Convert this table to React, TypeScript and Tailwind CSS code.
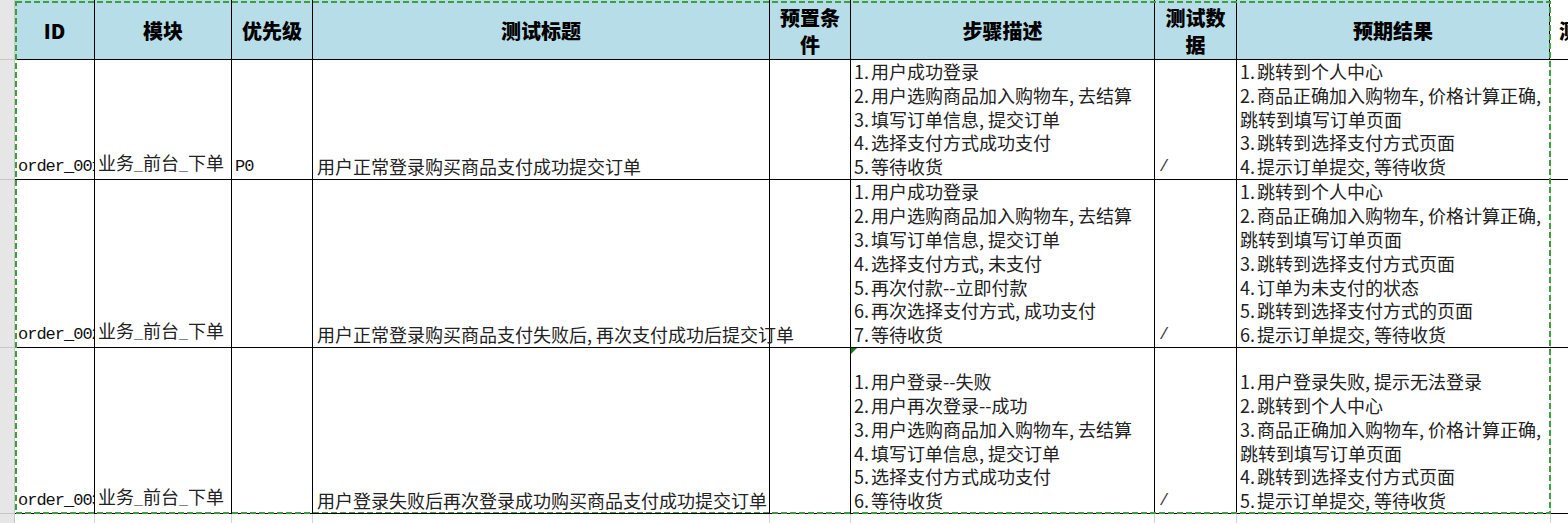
import React from "react";

const bodyFont = {
  fontFamily: '"Noto Sans CJK SC", "Noto Sans", sans-serif',
};
const mono = { fontFamily: '"Liberation Mono", "Noto Sans CJK SC", monospace' };

type Row = {
  id: string;
  mod: string;
  pri: string;
  title: string;
  steps: string[];
  data: string;
  expect: string[];
  h: string;
  tri?: boolean;
  overflowTitle?: boolean;
};

const rows: Row[] = [
  {
    id: "order_001",
    mod: "业务_前台_下单",
    pri: "P0",
    title: "用户正常登录购买商品支付成功提交订单",
    steps: [
      "1.用户成功登录",
      "2.用户选购商品加入购物车, 去结算",
      "3.填写订单信息, 提交订单",
      "4.选择支付方式成功支付",
      "5.等待收货",
    ],
    data: "/",
    expect: [
      "1.跳转到个人中心",
      "2.商品正确加入购物车, 价格计算正确,",
      "跳转到填写订单页面",
      "3.跳转到选择支付方式页面",
      "4.提示订单提交, 等待收货",
    ],
    h: "h-[120px]",
  },
  {
    id: "order_002",
    mod: "业务_前台_下单",
    pri: "",
    title: "用户正常登录购买商品支付失败后, 再次支付成功后提交订单",
    steps: [
      "1.用户成功登录",
      "2.用户选购商品加入购物车, 去结算",
      "3.填写订单信息, 提交订单",
      "4.选择支付方式, 未支付",
      "5.再次付款--立即付款",
      "6.再次选择支付方式, 成功支付",
      "7.等待收货",
    ],
    data: "/",
    expect: [
      "1.跳转到个人中心",
      "2.商品正确加入购物车, 价格计算正确,",
      "跳转到填写订单页面",
      "3.跳转到选择支付方式页面",
      "4.订单为未支付的状态",
      "5.跳转到选择支付方式的页面",
      "6.提示订单提交, 等待收货",
    ],
    h: "h-[168px]",
    overflowTitle: true,
  },
  {
    id: "order_003",
    mod: "业务_前台_下单",
    pri: "",
    title: "用户登录失败后再次登录成功购买商品支付成功提交订单",
    steps: [
      "1.用户登录--失败",
      "2.用户再次登录--成功",
      "3.用户选购商品加入购物车, 去结算",
      "4.填写订单信息, 提交订单",
      "5.选择支付方式成功支付",
      "6.等待收货",
    ],
    data: "/",
    expect: [
      "1.用户登录失败, 提示无法登录",
      "2.跳转到个人中心",
      "3.商品正确加入购物车, 价格计算正确,",
      "跳转到填写订单页面",
      "4.跳转到选择支付方式页面",
      "5.提示订单提交, 等待收货",
    ],
    h: "h-[166px]",
    tri: true,
  },
];

function Lines({ lines }: { lines: string[] }) {
  return (
    <>
      {lines.map((l, i) => {
        const m = l.match(/^(\d\.)(.*)$/);
        return (
          <div key={i} className="whitespace-nowrap">
            {m ? (
              <>
                <span className="mr-[2px]">{m[1]}</span>
                {m[2]}
              </>
            ) : (
              l
            )}
          </div>
        );
      })}
    </>
  );
}

const cellBase =
  "border-r border-b border-black flex flex-col justify-end pl-[3px] text-[18px] leading-[23.8px] text-[#222]";

export default function App() {
  return (
    <div
      className="relative w-[1568px] h-[523px] overflow-hidden bg-white"
      style={bodyFont}
    >
      {/* header */}
      <div className="flex h-[60px]">
        <div className="w-[15px] shrink-0 bg-[#e6e6e6] border-r border-b border-[#c6c6c6]" />
        {[
          { t: "ID", w: "w-[80px]" },
          { t: "模块", w: "w-[137px]" },
          { t: "优先级", w: "w-[81px]" },
          { t: "测试标题", w: "w-[457px]" },
          { t: "预置条\n件", w: "w-[81px]" },
          { t: "步骤描述", w: "w-[304px]" },
          { t: "测试数\n据", w: "w-[82px]" },
          { t: "预期结果", w: "w-[313px]" },
        ].map((h, i) => (
          <div
            key={i}
            className={`${h.w} shrink-0 bg-[#b7dde8] border-r border-b border-black flex flex-col items-center justify-center pt-[2px] text-[20px] font-black leading-[27px] text-black whitespace-pre-line text-center`}
          >
            {h.t}
          </div>
        ))}
        <div className="flex-1 border-b border-black flex items-center pl-[9px] pt-[2px] text-[20px] font-black text-black whitespace-nowrap overflow-hidden">
          测试结果
        </div>
      </div>

      {rows.map((r, ri) => (
        <div key={ri} className={`flex ${r.h}`}>
          <div className="w-[15px] shrink-0 bg-[#e6e6e6] border-r border-b border-[#c6c6c6]" />
          <div className={`w-[80px] shrink-0 overflow-hidden ${cellBase}`}>
            <div
              className="whitespace-nowrap text-[17px] leading-[23.8px] text-[#111] tracking-[-1px]"
              style={mono}
            >
              {r.id}
            </div>
          </div>
          <div className={`w-[137px] shrink-0 overflow-hidden ${cellBase}`}>
            <div className="whitespace-nowrap">
              {r.mod.split("_").map((p, i, a) => (
                <React.Fragment key={i}>
                  {p}
                  {i < a.length - 1 && (
                    <span className="text-[15px]" style={mono}>
                      _
                    </span>
                  )}
                </React.Fragment>
              ))}
            </div>
          </div>
          <div className={`w-[81px] shrink-0 overflow-hidden ${cellBase}`}>
            <div className="whitespace-nowrap text-[17px] text-[#111] tracking-[-1px]" style={mono}>
              {r.pri}
            </div>
          </div>
          <div
            className={`w-[457px] shrink-0 relative z-10 ${
              r.overflowTitle ? "overflow-visible" : "overflow-hidden"
            } ${cellBase} pl-[4px]`}
          >
            <div className="whitespace-nowrap">{r.title}</div>
          </div>
          <div className={`w-[81px] shrink-0 ${cellBase}`} />
          <div className={`w-[304px] shrink-0 relative overflow-hidden ${cellBase}`}>
            {r.tri && (
              <div className="absolute left-0 top-0 w-0 h-0 border-t-[6px] border-r-[6px] border-t-[#1c7a1c] border-r-transparent" />
            )}
            <Lines lines={r.steps} />
          </div>
          <div className={`w-[82px] shrink-0 overflow-hidden ${cellBase} pl-[4px]`}>
            <div className="whitespace-nowrap text-[17px] text-[#444]" style={mono}>
              {r.data}
            </div>
          </div>
          <div className="w-[313px] shrink-0 overflow-hidden border-b border-black flex flex-col justify-end pl-[3px] text-[18px] leading-[23.8px] text-[#222]">
            <Lines lines={r.expect} />
          </div>
          <div className="w-px shrink-0 bg-[#d4d4d4] border-b border-black" />
          <div className="flex-1 border-b border-black" />
        </div>
      ))}

      {/* trailing strip */}
      <div className="flex h-[9px]">
        <div className="w-[15px] shrink-0 bg-[#e6e6e6] border-r border-[#c6c6c6]" />
        {[
          "w-[80px]",
          "w-[137px]",
          "w-[81px]",
          "w-[457px]",
          "w-[81px]",
          "w-[304px]",
          "w-[82px]",
          "w-[314px]",
        ].map((w, i) => (
          <div key={i} className={`${w} shrink-0 border-r border-[#d4d4d4]`} />
        ))}
        <div className="flex-1" />
      </div>

      {/* marching ants selection overlay */}
      <svg
        className="absolute left-0 top-0 pointer-events-none"
        width={1568}
        height={523}
      >
        <rect
          x={16}
          y={2}
          width={1534}
          height={511}
          fill="none"
          stroke="#3c9e3c"
          strokeWidth={2}
          strokeDasharray="6 3"
        />
      </svg>
    </div>
  );
}
